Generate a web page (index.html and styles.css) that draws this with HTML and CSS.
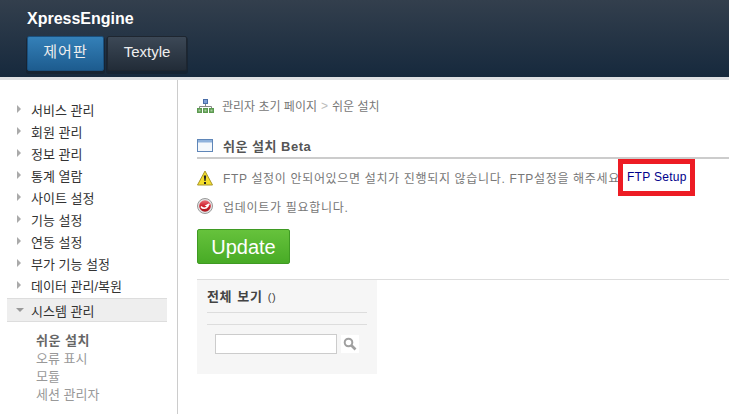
FILE: index.html
```html
<!DOCTYPE html>
<html lang="ko">
<head>
<meta charset="utf-8"/>
<title>XpressEngine</title>
<link rel="stylesheet" href="styles.css">
</head>
<body>
<header class="top">
  <h1>XpressEngine</h1>
  <nav class="tabs">
    <a class="tab active">제어판</a>
    <a class="tab">Textyle</a>
  </nav>
</header>
<div class="wrap">
  <aside class="side">
    <ul class="menu">
      <li><i class="arrow"></i>서비스 관리</li>
      <li><i class="arrow"></i>회원 관리</li>
      <li><i class="arrow"></i>정보 관리</li>
      <li><i class="arrow"></i>통계 열람</li>
      <li><i class="arrow"></i>사이트 설정</li>
      <li><i class="arrow"></i>기능 설정</li>
      <li><i class="arrow"></i>연동 설정</li>
      <li><i class="arrow"></i>부가 기능 설정</li>
      <li><i class="arrow"></i>데이터 관리/복원</li>
      <li class="open"><i class="arrow down"></i>시스템 관리</li>
    </ul>
    <ul class="sub">
      <li class="current">쉬운 설치</li>
      <li>오류 표시</li>
      <li>모듈</li>
      <li>세션 관리자</li>
    </ul>
  </aside>
  <main class="content">
    <div class="crumb">
      <svg width="18" height="14" viewBox="0 0 18 14">
        <rect x="6.500" y="0.500" width="4" height="4" fill="#7f9fd6" stroke="#4a6ea8" stroke-width="1"/>
        <path d="M8.500 5v3M2.500 9V7.500h12V9" stroke="#888" fill="none"/>
        <rect x="0" y="9" width="5" height="5" fill="#5c9a50"/>
        <rect x="6" y="9" width="5" height="5" fill="#5c9a50"/>
        <rect x="12" y="9" width="5" height="5" fill="#5c9a50"/>
        <rect x="1.500" y="10.500" width="2" height="2" fill="#a9cf9f"/>
        <rect x="7.500" y="10.500" width="2" height="2" fill="#a9cf9f"/>
        <rect x="13.500" y="10.500" width="2" height="2" fill="#a9cf9f"/>
      </svg>
      <span>관리자 초기 페이지</span><span class="sep">&gt;</span><span>쉬운 설치</span>
    </div>
    <div class="title">
      <svg width="16" height="13" viewBox="0 0 16 13">
        <rect x="0.500" y="0.500" width="15" height="12" fill="#f4f8fc" stroke="#5f86b8"/>
        <rect x="1" y="1" width="14" height="2.500" fill="#8fb2dc"/>
      </svg>
      <strong>쉬운 설치 Beta</strong>
    </div>
    <p class="msg">
      <svg width="16" height="16" viewBox="0 0 16 16">
        <path d="M8 1 15.500 15H.5z" fill="#f4de2c" stroke="#a8962a" stroke-width="1" stroke-linejoin="round"/>
        <path d="M6.800 5.500h2.400L8.600 11H7.400z" fill="#222"/>
        <rect x="7" y="12" width="2" height="2" fill="#222"/>
      </svg>
      <span>FTP 설정이 안되어있으면 설치가 진행되지 않습니다. FTP설정을 해주세요</span>
      <a class="ftp">FTP Setup</a>
    </p>
    <p class="msg need">
      <svg width="16" height="16" viewBox="0 0 16 16">
        <defs>
          <linearGradient id="red" x1="0" y1="0" x2="0" y2="1">
            <stop offset="0" stop-color="#e8707a"/>
            <stop offset="0.5" stop-color="#d0202c"/>
            <stop offset="1" stop-color="#a81820"/>
          </linearGradient>
        </defs>
        <circle cx="8" cy="8" r="7.500" fill="#e4e4e4" stroke="#999"/>
        <circle cx="8" cy="8" r="5.800" fill="url(#red)"/>
        <path d="M4 8.500c1.500 2.500 5 2.500 7-.5l-1.500-.5 3-1.500" stroke="#fff" stroke-width="1.500" fill="none"/>
      </svg>
      <span>업데이트가 필요합니다.</span>
    </p>
    <a class="update">Update</a>
    <hr class="rule"/>
    <section class="box">
      <h2>전체 보기 <span>()</span></h2>
      <div class="box-line"></div>
      <form class="search">
        <input type="text"/>
        <span class="search-btn">
          <svg width="14" height="14" viewBox="0 0 14 14">
            <circle cx="5.500" cy="5.500" r="3.800" fill="none" stroke="#a0a0a0" stroke-width="2"/>
            <path d="M8.500 8.500 12.500 12.500" stroke="#a0a0a0" stroke-width="2.600"/>
          </svg>
        </span>
      </form>
    </section>
  </main>
</div>
</body>
</html>
```
FILE: styles.css
```css
/* XE admin */
* {
    box-sizing: border-box;
}

body {
    margin: 0;
    height: 414px;
    overflow: hidden;
    background-color: #fff;
    color: #666;
    font-family: "Liberation Sans", "Noto Sans CJK KR", sans-serif;
    font-size: 12px;
}

.top {
    height: 80px;
    padding: 9px 0 0 27px;
    background: linear-gradient(#333f4d, #16293d);
    border-bottom: 3px solid #dfe1e4;
}

.top h1 {
    margin: 0 0 8px;
    font-size: 16px;
    line-height: 19px;
    color: #fff;
}

.tabs {
    display: flex;
    gap: 3px;
}

.tab {
    width: 77px;
    height: 35px;
    line-height: 29px;
    text-align: center;
    font-size: 15px;
    color: #eee;
    background: linear-gradient(#3c4856, #222c38);
    border: 1px solid #1e2630;
    border-radius: 2px;
    box-shadow: 0 2px 0 1px rgba(20, 28, 38, 0.5);
}

.tab + .tab {
    width: 80px;
}

.tab.active {
    background: linear-gradient(#3480b8, #1d5c8f);
    border-color: #1a4f7c;
    letter-spacing: 1px;
}

.wrap {
    display: flex;
    height: 334px;
}

.side {
    width: 178px;
    padding: 18px 10px 0 7px;
    border-right: 1px solid #ccc;
}

.menu, .sub {
    list-style: none;
    margin: 0;
    padding: 0;
}

.menu li {
    display: flex;
    align-items: center;
    height: 22px;
    padding-left: 9px;
    color: #333;
    font-size: 13px;
}

.menu li.open {
    height: 24px;
    margin-top: 2px;
    background-color: #eee;
    border-top: 1px solid #ddd;
    border-bottom: 1px solid #ddd;
}

.arrow {
    width: 0;
    height: 0;
    margin-right: 10px;
    border-left: 4px solid #aaa;
    border-top: 4px solid transparent;
    border-bottom: 4px solid transparent;
    margin-left: 1px;
}

.arrow.down {
    margin-left: 0;
    margin-right: 7px;
    border-top: 4px solid #999;
    border-left: 4px solid transparent;
    border-right: 4px solid transparent;
    border-bottom: 0;
}

.sub {
    padding: 10px 0 0 29px;
}

.sub li {
    height: 18px;
    line-height: 18px;
    color: #999;
    font-size: 13px;
}

.sub li.current {
    font-weight: bold;
    color: #666;
    letter-spacing: 0.5px;
}

.content {
    flex: 1;
    padding: 18px 0 0 19px;
    min-width: 0;
}

.crumb {
    display: flex;
    align-items: center;
    height: 15px;
    font-size: 12px;
    color: #777;
}

.crumb svg {
    margin-right: 7px;
}

.sep {
    margin: 0 4px;
    color: #bbb;
}

.title {
    display: flex;
    align-items: center;
    gap: 10px;
    margin: 20px 0 0;
    height: 24px;
    color: #555;
}

.title strong {
    font-size: 13px;
    letter-spacing: 0.5px;
}

.msg {
    display: flex;
    align-items: center;
    gap: 10px;
    margin: 0;
    white-space: nowrap;
    height: 39px;
    border-top: 2px solid #ccc;
    color: #777;
    letter-spacing: 0.66px;
}

.msg.need {
    height: 20px;
    border-top: 0;
    letter-spacing: 0.7px;
}

.ftp {
    flex: none;
    width: 77px;
    height: 37px;
    margin-left: -12px;
    padding: 0 4px;
    line-height: 27px;
    color: #00008b;
    letter-spacing: 0.3px;
    border: 5px solid #ed1c24;
    background-color: #fff;
}

.update {
    display: block;
    width: 93px;
    height: 35px;
    margin-top: 13px;
    line-height: 35px;
    text-align: center;
    font-size: 20px;
    color: #fff;
    background: linear-gradient(#66c23c, #48ab26);
    border: 1px solid #3f9a23;
    border-radius: 2px;
}

.rule {
    height: 1px;
    margin: 15px 0 0;
    border: 0;
    background-color: #ddd;
}

.box {
    width: 180px;
    height: 94px;
    padding: 0 10px;
    background-color: #f6f6f6;
}

.box h2 {
    margin: 0;
    height: 33px;
    line-height: 33px;
    font-size: 13px;
    letter-spacing: 0.6px;
    word-spacing: 1px;
    color: #444;
    border-bottom: 1px solid #ddd;
}

.box h2 span {
    font-weight: normal;
    font-size: 11px;
}

.box-line {
    height: 12px;
    border-bottom: 1px solid #ddd;
}

.search {
    display: flex;
    align-items: center;
    margin: 9px 0 0 8px;
}

.search input {
    width: 122px;
    height: 20px;
    margin: 0;
    padding: 0;
    background-color: #fff;
    border: 1px solid #ccc;
}

.search-btn {
    display: flex;
    align-items: center;
    justify-content: center;
    width: 18px;
    height: 18px;
    margin-left: 4px;
    background-color: #fff;
}
```
